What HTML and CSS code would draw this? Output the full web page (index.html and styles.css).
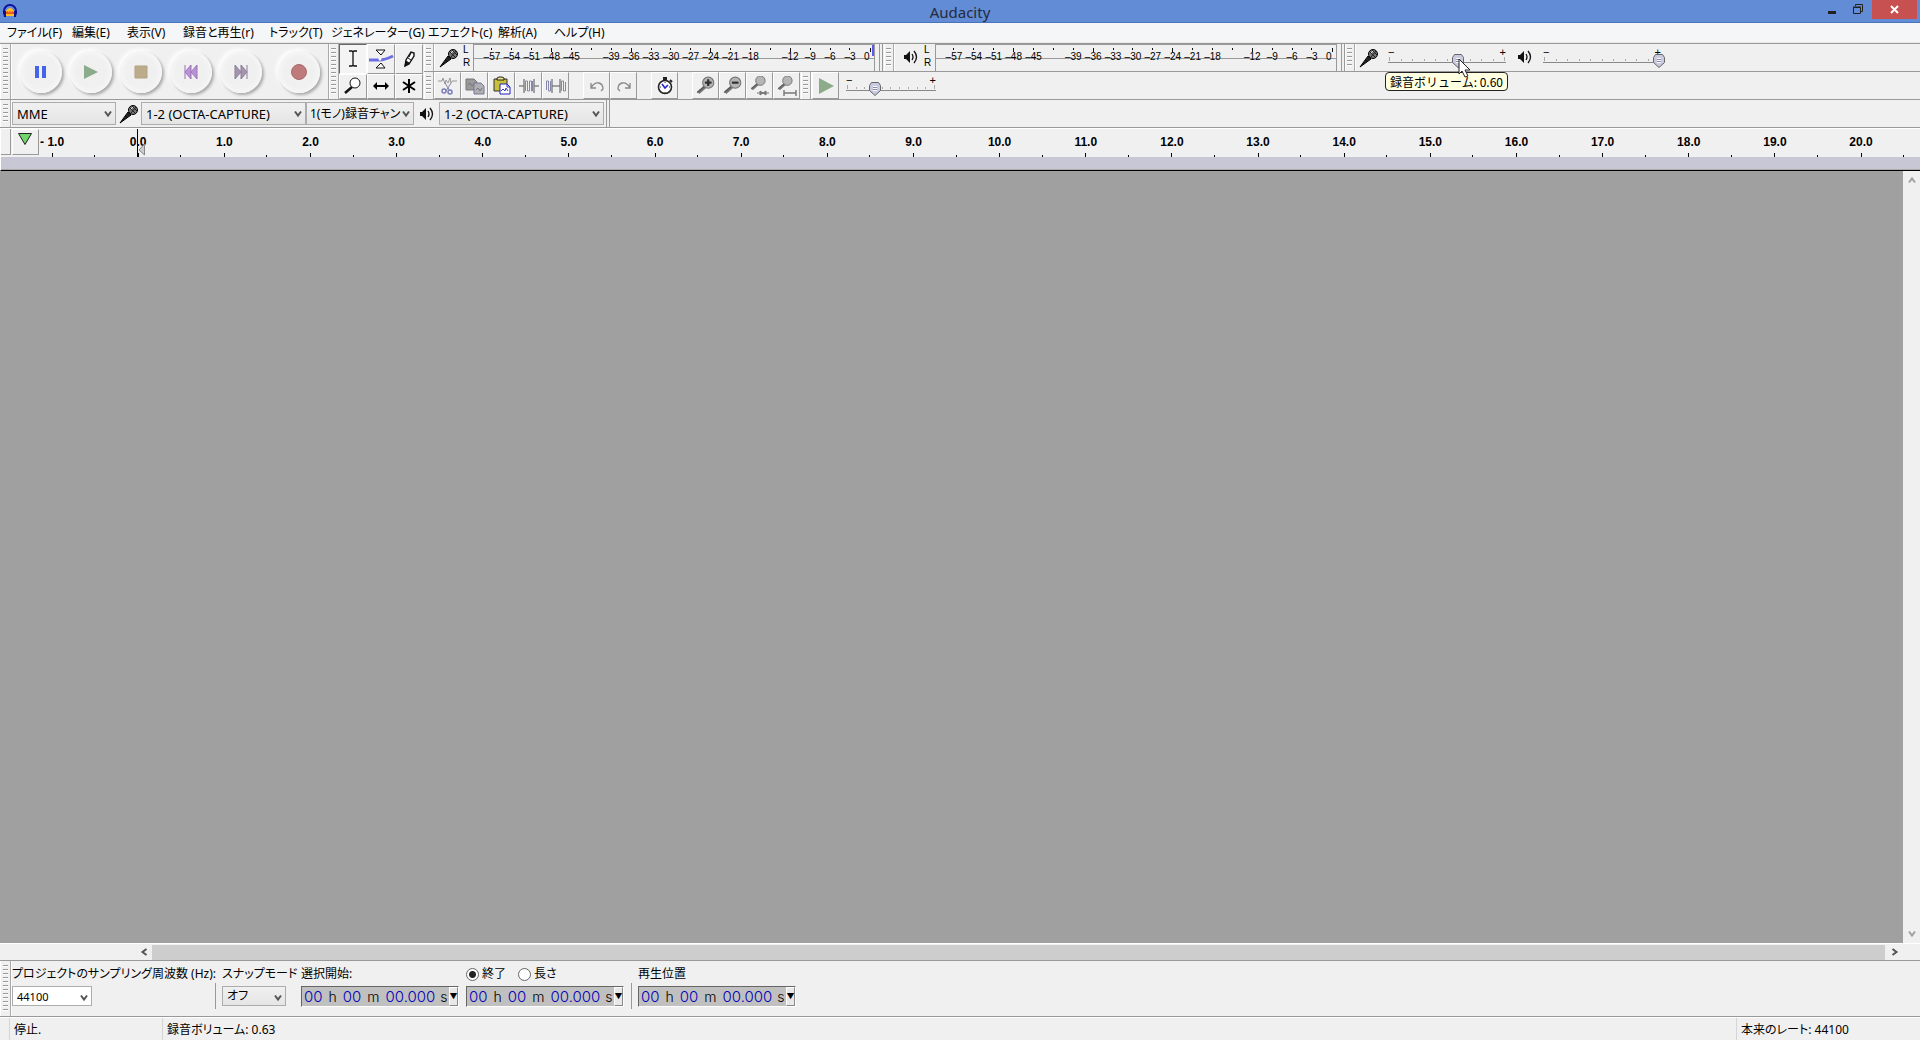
FILE: index.html
```html
<!DOCTYPE html>
<html lang="ja">
<head>
<meta charset="utf-8">
<title>Audacity</title>
<link rel="stylesheet" href="styles.css">
</head>
<body>
<svg class="defs" aria-hidden="true">
  <symbol id="mic" viewBox="0 0 20 20"><path d="M1 19 9 8l3 3z" fill="#222" stroke="#000"/><circle cx="14" cy="6" r="4.5" fill="#777" stroke="#000"/><path d="M11 4l5 5M13 2l5 5M12 9l5-6" stroke="#222" fill="none"/><path d="M12 5l2-2" stroke="#ddd"/></symbol>
  <symbol id="speaker" viewBox="0 0 14 14"><path d="M0 5h2l4-4v12L2 9H0z" fill="#111"/><path d="M8 4q2 3 0 6M10 1q5 6 0 12" fill="none" stroke="#111" stroke-width="1.3"/></symbol>
  <symbol id="chev" viewBox="0 0 8 8"><path d="M1 1.500l3 4 3-4" fill="none" stroke="#555" stroke-width="2"/></symbol>
  <symbol id="glass" viewBox="0 0 18 18"><path d="M2 15l7-6" stroke="#777" stroke-width="3"/><path d="M1 15l7-6" stroke="#555"/><circle cx="11" cy="6" r="5" fill="#b5b5b5" stroke="#777"/></symbol>
</svg>
<div class="window">
<header class="titlebar">
  <svg class="logo" viewBox="0 0 16 16"><path d="M2 11V8a6 6 0 0 1 12 0v3" fill="none" stroke="#10109a" stroke-width="2"/><path d="M4 13V8q4-6 8 0v5z" fill="#ffc020"/><path d="M4 9l2-1 1 2 1-3 1 3 1-2 2 1v2H4z" fill="#f05020"/><path d="M1 8h3v6H2zM15 8h-3v6h2z" fill="#10108a"/></svg>
  <h1>Audacity</h1>
  <div class="controls">
    <button aria-label="最小化"><svg width="10" height="12"><path d="M1 9.500h8" stroke="#222" stroke-width="3"/></svg></button>
    <button aria-label="元に戻す"><svg width="12" height="12"><path d="M1.500 4.500h7v6h-7zM1 4h8M3.500 3V1.500h7v7H9" fill="none" stroke="#222"/></svg></button>
    <button class="close" aria-label="閉じる"><svg width="10" height="10"><path d="M1 1l7 7M8 1L1 8" stroke="#fff" stroke-width="2"/></svg></button>
  </div>
</header>
<nav class="menu">
  <a href="#">ファイル(F)</a><a href="#">編集(E)</a><a href="#">表示(V)</a><a href="#">録音と再生(r)</a><a href="#">トラック(T)</a><a href="#">ジェネレーター(G)</a><a href="#">エフェクト(c)</a><a href="#">解析(A)</a><a href="#">ヘルプ(H)</a>
</nav>
<div class="dock">
  <section class="transport">
    <span class="grip"></span>
    <div class="rounds">
      <button aria-label="一時停止"><svg viewBox="0 0 16 16"><path d="M2 2h4v12H2zM9 2h4v12H9z" fill="#4664ea"/></svg></button>
      <button aria-label="再生"><svg viewBox="0 0 16 16"><path d="M1 1l14 7-14 7z" fill="#8bab8b"/></svg></button>
      <button aria-label="停止"><svg viewBox="0 0 16 16"><path d="M2 2h12v12H2z" fill="#bcac89" stroke="#b3a37e"/></svg></button>
      <button aria-label="先頭へ"><svg viewBox="0 0 16 16"><path d="M2 1v14" stroke="#9874bb"/><path d="M8 1v14L2 8zM14 1v14L8 8z" fill="#bd91d6" stroke="#9874bb"/></svg></button>
      <button aria-label="末尾へ"><svg viewBox="0 0 16 16"><path d="M14 1v14" stroke="#8d7c9b"/><path d="M2 1v14l6-7zM8 1v14l6-7z" fill="#a596b0" stroke="#8d7c9b"/></svg></button>
      <button class="rec" aria-label="録音"><svg viewBox="0 0 16 16"><circle cx="8" cy="8" r="7.500" fill="#bf7a7b" stroke="#a86a6a"/></svg></button>
    </div>
  </section>
  <section class="tools">
    <span class="grip"></span>
    <div class="toolgrid">
      <button class="btn pressed" aria-label="選択"><svg viewBox="0 0 20 20"><path d="M6 2h3l1 1 1-1h3M6 17h3l1-1 1 1h3M10 3v13" fill="none" stroke="#111" stroke-width="1.300"/></svg></button>
      <button class="btn" aria-label="エンベロープ"><svg class="wide" viewBox="0 0 26 24"><path d="M1 13h10q6 0 14-4" fill="none" stroke="#6a6ee0" stroke-width="3"/><path d="M8 3h9l-4 5zM8 21h9l-4-5z" fill="#fff" stroke="#111"/><circle cx="12" cy="12" r="1.500" fill="#fff"/></svg></button>
      <button class="btn" aria-label="描画"><svg viewBox="0 0 20 20"><path d="M6 17l1-6 5-8 3 1v3l-5 8z" fill="#fff" stroke="#111" stroke-width="1.400"/><path d="M6 17l1-5 3 2zM9 9l3 2M12 4l-2 4" fill="#111" stroke="#111"/></svg></button>
      <button class="btn" aria-label="ズーム"><svg viewBox="0 0 20 20"><path d="M2 17l7-6" stroke="#111" stroke-width="2.500"/><circle cx="12" cy="7" r="5" fill="#fff" stroke="#111"/></svg></button>
      <button class="btn" aria-label="タイムシフト"><svg viewBox="0 0 20 20"><path d="M3 10h14" stroke="#000" stroke-width="2"/><path d="M2 10l4-4v8zM18 10l-4-4v8z"/></svg></button>
      <button class="btn" aria-label="マルチツール"><svg viewBox="0 0 20 20"><path d="M10 3v14M4 6l12 8M4 14l12-8" stroke="#000" stroke-width="2"/></svg></button>
    </div>
  </section>
  <div class="rows">
    <div class="row">
      <section class="meterbar recbar">
        <span class="grip"></span><svg class="mic"><use href="#mic"/></svg>
        <div class="lr"><span>L</span><span>R</span></div>
        <div class="meter live"><span>–57</span><span>–54</span><span>–51</span><span class="m">–48</span><span>–45</span><span></span><span>–39</span><span class="m">–36</span><span>–33</span><span>–30</span><span>–27</span><span class="m">–24</span><span>–21</span><span>–18</span><span></span><span class="m">–12</span><span>–9</span><span>–6</span><span>–3</span><span class="zero">0</span></div>
        <span class="cap"></span>
      </section>
      <section class="meterbar playbar">
        <span class="grip"></span><svg class="spk"><use href="#speaker"/></svg>
        <div class="lr"><span>L</span><span>R</span></div>
        <div class="meter"><span>–57</span><span>–54</span><span>–51</span><span class="m">–48</span><span>–45</span><span></span><span>–39</span><span class="m">–36</span><span>–33</span><span>–30</span><span>–27</span><span class="m">–24</span><span>–21</span><span>–18</span><span></span><span class="m">–12</span><span>–9</span><span>–6</span><span>–3</span><span class="zero">0</span></div>
        <span class="cap"></span>
      </section>
      <section class="mixer">
        <span class="grip"></span><svg class="mic"><use href="#mic"/></svg>
        <div class="slider">
          <div class="signs"><span>−</span><span>+</span></div>
          <div class="ticks"><i></i><i></i><i></i><i></i><i></i><i></i><i></i><i></i><i></i><i></i><i></i></div>
          <input type="range" min="0" max="100" value="60" aria-label="録音ボリューム">
          <div class="tip" role="tooltip">録音ボリューム: 0.60</div>
          <svg class="cursor" viewBox="0 0 13 20"><path d="M1 1v15l3-3 3 6 3-1-3-6h5z" fill="#fff" stroke="#222"/></svg>
        </div>
        <svg class="spk"><use href="#speaker"/></svg>
        <div class="slider">
          <div class="signs"><span>−</span><span>+</span></div>
          <div class="ticks"><i></i><i></i><i></i><i></i><i></i><i></i><i></i><i></i><i></i><i></i><i></i></div>
          <input type="range" min="0" max="100" value="100" aria-label="再生ボリューム">
        </div>
      </section>
    </div>
    <div class="row edit">
      <span class="grip"></span>
      <div class="group">
        <button class="btn" aria-label="切り取り"><svg viewBox="0 0 20 20"><path d="M0 5h4l1-3 2 6 1-4 2 3 2-5 1 5 1-2h5" fill="none" stroke="#999"/><path d="M7 7l5 8M13 7l-5 8" stroke="#8286a8"/><circle cx="6" cy="15" r="2" fill="none" stroke="#7a7eb8" stroke-width="1.500"/><circle cx="12" cy="16" r="2" fill="none" stroke="#7a7eb8" stroke-width="1.500"/></svg></button>
        <button class="btn" aria-label="コピー"><svg viewBox="0 0 20 20"><path d="M1 3h8l3 3v8H1z" fill="#999" stroke="#777"/><path d="M9 7h7l3 3v8H9z" fill="#b0b0b4" stroke="#777799"/><path d="M3 9l2-2 2 3 2-2M11 14l2-2 2 3 2-3" fill="none" stroke="#777"/></svg></button>
        <button class="btn" aria-label="貼り付け"><svg viewBox="0 0 20 20"><path d="M2 3h13v12H2z" fill="#c8bf3a" stroke="#333"/><path d="M5 4V2l2-1h3l2 1v2z" fill="#eee48a" stroke="#222"/><path d="M8 8h7l3 3v7H8z" fill="#fff" stroke="#2020c0"/><path d="M15 8v3h3M9 15l2-2 2 2 1-3 2 3" fill="none" stroke="#3a3ac8"/></svg></button>
        <button class="btn" aria-label="トリム"><svg viewBox="0 0 20 20"><path d="M0 10h5M15 10h5" stroke="#888" stroke-width="1.500"/><path d="M5 3v14M15 3v14" stroke="#777" stroke-width="1.300"/><path d="M6.500 15V5h2v10h2V5h2v10h1V5" fill="none" stroke="#8587ad"/></svg></button>
        <button class="btn" aria-label="無音化"><svg viewBox="0 0 20 20"><path d="M6 10h8" stroke="#888" stroke-width="1.500"/><path d="M6 3v14M14 3v14" stroke="#777" stroke-width="1.300"/><path d="M.5 14V5h2v10h2V5M15.500 15V5h2v10h2V6" fill="none" stroke="#8587ad"/></svg></button>
      </div>
      <div class="group">
        <button class="btn" aria-label="元に戻す"><svg viewBox="0 0 20 20"><path d="M4 12q3-6 8-5 4 1 4 6l-2 2M4 7v5h5" fill="none" stroke="#888" stroke-width="1.300"/></svg></button>
        <button class="btn" aria-label="やり直し"><svg viewBox="0 0 20 20"><path d="M16 12q-3-6-8-5-4 1-4 6l2 2M16 7v5h-5" fill="none" stroke="#888" stroke-width="1.300"/></svg></button>
      </div>
      <div class="group">
        <button class="btn" aria-label="同期ロック"><svg viewBox="0 0 20 20"><path d="M8 1h4v3H8z" fill="#222"/><path d="M15 4l2 2" stroke="#222" stroke-width="2"/><circle cx="10" cy="11" r="6.500" fill="#fff" stroke="#222" stroke-width="1.600"/><path d="M7 8l3 4 3-3" fill="none" stroke="#2424d0" stroke-width="1.600"/><path d="M10 6v1M10 16v1M5 11h1M14 11h1" stroke="#333"/></svg></button>
      </div>
      <div class="group">
        <button class="btn" aria-label="拡大"><svg viewBox="0 0 18 18"><use href="#glass"/><path d="M8 6h6M11 3v6" stroke="#333" stroke-width="2"/></svg></button>
        <button class="btn" aria-label="縮小"><svg viewBox="0 0 18 18"><use href="#glass"/><path d="M8 6h6" stroke="#333" stroke-width="2"/></svg></button>
        <button class="btn" aria-label="選択範囲に合わせる"><svg viewBox="0 0 20 20"><use href="#glass" x="0" y="-1" width="17" height="17"/><path d="M7 17h12M10 15l3 2-3 2zM16 15l-3 2 3 2z" stroke="#777" fill="#777"/></svg></button>
        <button class="btn" aria-label="プロジェクトに合わせる"><svg viewBox="0 0 20 20"><use href="#glass" x="0" y="-1" width="17" height="17"/><path d="M7 17h12M7 14v6M19 14v6" stroke="#777" fill="none" stroke-width="1.400"/></svg></button>
      </div>
      <span class="grip"></span>
      <button class="btn" aria-label="指定速度で再生"><svg viewBox="0 0 20 20"><path d="M3 2l15 8-15 8z" fill="#8bab8b"/></svg></button>
      <div class="slider speed">
        <div class="signs"><span>−</span><span>+</span></div>
        <div class="ticks"><i></i><i></i><i></i><i></i><i></i><i></i><i></i><i></i><i></i><i></i><i></i></div>
        <input type="range" min="0" max="100" value="31" aria-label="再生速度">
      </div>
    </div>
  </div>
</div>
<section class="devices">
  <span class="grip"></span>
  <label class="sel w-host"><select aria-label="ホスト"><option>MME</option></select><svg><use href="#chev"/></svg></label>
  <svg class="mic"><use href="#mic"/></svg>
  <label class="sel w-dev"><select aria-label="録音デバイス"><option>1-2 (OCTA-CAPTURE)</option></select><svg><use href="#chev"/></svg></label>
  <label class="sel w-chan"><select aria-label="録音チャンネル"><option>1(モノ)録音チャン</option></select><svg><use href="#chev"/></svg></label>
  <svg class="spk"><use href="#speaker"/></svg>
  <label class="sel w-dev"><select aria-label="再生デバイス"><option>1-2 (OCTA-CAPTURE)</option></select><svg><use href="#chev"/></svg></label>
  <span class="cap"></span>
</section>
<section class="ruler">
  <div class="scale"><span>- 1.0</span><span>0.0</span><span>1.0</span><span>2.0</span><span>3.0</span><span>4.0</span><span>5.0</span><span>6.0</span><span>7.0</span><span>8.0</span><span>9.0</span><span>10.0</span><span>11.0</span><span>12.0</span><span>13.0</span><span>14.0</span><span>15.0</span><span>16.0</span><span>17.0</span><span>18.0</span><span>19.0</span><span>20.0</span></div>
  <div class="band"></div>
  <div class="pincorner"></div>
  <button class="pin" aria-label="再生ヘッド"><svg width="17" height="15"><path d="M1.500 1.500h13l-6.500 11z" fill="#6fd66a" stroke="#222"/></svg></button>
  <svg class="playhead" width="9" height="28"><path d="M.5 0v28" stroke="#000" stroke-width="1"/><path d="M7.500 15v11L2 21z" fill="#ccc" stroke="#888"/></svg>
</section>
<main class="workspace">
  <div class="tracks"></div>
  <div class="vscroll"><svg><use href="#chev"/></svg><svg><use href="#chev"/></svg></div>
</main>
<div class="hscroll"><svg class="left"><use href="#chev"/></svg><div class="thumb"></div><svg class="right"><use href="#chev"/></svg></div>
<section class="selection">
  <span class="grip"></span>
  <div class="field f-rate"><label for="rate">プロジェクトのサンプリング周波数 (Hz):</label><div class="sel combo"><input id="rate" type="text" value="44100"><svg><use href="#chev"/></svg></div></div>
  <span class="sep"></span>
  <div class="field f-snap"><label for="snap">スナップモード</label><div class="sel snap"><select id="snap"><option>オフ</option></select><svg><use href="#chev"/></svg></div></div>
  <div class="field f-time"><span class="cap-label">選択開始:</span><div class="time"><b>00</b><span>h</span><b>00</b><span>m</span><b>00.000</b><span>s</span><button aria-label="形式">▼</button></div></div>
  <div class="field f-end"><div class="radios"><label><input type="radio" name="end" checked>終了</label><label><input type="radio" name="end">長さ</label></div><div class="time"><b>00</b><span>h</span><b>00</b><span>m</span><b>00.000</b><span>s</span><button aria-label="形式">▼</button></div></div>
  <span class="sep"></span>
  <div class="field"><span class="cap-label">再生位置</span><div class="time"><b>00</b><span>h</span><b>00</b><span>m</span><b>00.000</b><span>s</span><button aria-label="形式">▼</button></div></div>
</section>
<footer class="status"><span class="s1">停止.</span><span class="s2">録音ボリューム: 0.63</span><span class="s3">本来のレート: 44100</span></footer>
</div>
</body>
</html>
```
FILE: styles.css
```css
* { box-sizing: border-box; }
body { margin: 0; background: #f0f0f0; color: #000; font: 12px/16px "Noto Sans", "Noto Sans CJK JP", sans-serif; font-feature-settings: "palt"; }
button { padding: 0; border: 0; background: none; font: inherit; color: inherit; }
svg { display: block; flex: none; }
.defs { position: absolute; width: 0; height: 0; }
.window { display: flex; flex-direction: column; min-height: 100vh; }

.titlebar { display: grid; grid-template-columns: 1fr auto 1fr; height: 23px; background: #628cd5; border-bottom: 1px solid #4a73bb; }
.logo { width: 16px; height: 16px; margin: 3px 0 0 2px; }
.titlebar h1 { margin: 0; font: 400 15px/24px "Noto Sans", sans-serif; color: #25293a; }
.controls { display: flex; justify-content: flex-end; align-items: flex-start; padding-right: 3px; }
.controls button { display: flex; justify-content: center; width: 26px; height: 19px; padding-top: 3px; }
.controls button:first-child { width: 27px; }
.controls button:nth-child(2) { margin-right: 1px; }
.controls .close { width: 45px; padding-top: 5px; background: #c75050; }

.menu { display: grid; grid-template-columns: 65px 55px 56px 86px 62px 97px 70px 56px auto; justify-content: start; height: 20px; padding-left: 7px; background: #f5f6f8; border-bottom: 1px solid #e8e8e8; }
.menu a { color: #000; text-decoration: none; white-space: nowrap; line-height: 20px; }

.grip { flex: none; width: 11px; border: 1px solid #aaa; border-width: 0 1px 0 0; box-shadow: inset 1px 0 #fff, 1px 0 #fff; background: repeating-linear-gradient(#999 0 1px, #fff 1px 2px, transparent 2px 4px) center / 5px calc(100% - 8px) no-repeat; }
.mic { width: 20px; height: 20px; }
.spk { width: 14px; height: 14px; }
.cap { width: 4px; border: 1px solid #999; border-width: 0 1px; }

.dock { display: grid; grid-template-columns: 328px 96px 1fr; height: 57px; border-top: 1px solid #999; border-bottom: 1px solid #999; }
.transport, .tools { display: flex; }
.tools { border-left: 1px solid #aaa; }
.tools .grip { width: 10px; }
.rounds { display: flex; align-items: center; gap: 8px; padding-left: 9px; }
.rounds button { display: flex; align-items: center; justify-content: center; width: 42px; height: 42px; border-radius: 50%; background: radial-gradient(#f0f0f0 50%, #f7f7f7 75%); box-shadow: 2px 2px 3px #aaa, -2px -2px 4px #fff; }
.rounds svg { width: 16px; height: 16px; }
.rounds .rec { margin-left: 8px; }
.toolgrid { display: grid; grid-template-columns: repeat(3, 28px); }
.btn { display: flex; align-items: center; justify-content: center; flex: none; width: 27px; background: #f0f0f0; border: 1px solid; border-color: #fff #999 #999 #fff; }
.toolgrid .btn { width: auto; }
.btn svg { width: 20px; height: 20px; }
.btn .wide { width: 26px; height: 24px; }
.btn.pressed { border-color: #666 #fff #fff #666; background: #f4f4f4; }

.rows { display: grid; grid-template-rows: 28px 27px; }
.row { display: flex; min-width: 0; }
.row:first-child { border-bottom: 1px solid #999; }
.row .grip { width: 10px; }
.meterbar { display: flex; align-items: stretch; width: 460px; }
.playbar { width: 461px; }
.meterbar .mic { margin: 4px 0 0 5px; }
.meterbar .spk { margin: 6px 0 0 10px; }
.lr { display: grid; grid-template-rows: 13px 13px; width: 14px; padding-left: 4px; font: 10px/12px "Liberation Sans", sans-serif; }
.playbar .lr { width: 17px; padding-left: 6px; }
.meter { display: flex; width: 402px; padding-left: 8px; border: 1px solid #999; border-width: 1px 1px 0 1px; background: linear-gradient(#999, #999) 0 13px / 100% 1px no-repeat; font: 10px/10px "Liberation Sans", sans-serif; }
.meter span { flex: 1; min-width: 0; display: flex; justify-content: center; align-items: flex-start; padding-top: 7px; white-space: nowrap; background: linear-gradient(#111, #111) 50% 3px / 1px 2px no-repeat; }
.meter .m { background-size: 1px 4px; }
.meter .zero { flex: none; width: 14px; justify-content: flex-start; padding-left: 4px; background-position: 10px 3px; background-size: 1px 4px; }
.meter.live .zero { border-right: 2px solid transparent; border-image: linear-gradient(#5a5af0 0 11px, transparent 11px) 2; }
.meterbar .cap { margin-left: 4px; }

.mixer { display: flex; }
.mixer .mic { margin: 4px 5px 0 4px; }
.mixer .spk { margin: 6px 7px 0 8px; }
.slider { position: relative; display: grid; width: 126px; height: 27px; }
.slider > * { grid-area: 1 / 1; }
.signs { display: flex; justify-content: space-between; padding: 0 4px; font: 11px/16px "Liberation Sans", sans-serif; }
.ticks { display: flex; justify-content: space-between; align-self: start; height: 6px; margin: 13px 4px 0; padding: 0 1px; border-bottom: 1px solid #888; }
.ticks i { width: 1px; height: 2px; margin-top: 2px; background: #aaa; }
.ticks i:first-child, .ticks i:last-child { height: 4px; margin-top: 0; }
.slider input { appearance: none; align-self: start; width: 100%; height: 14px; margin: 10px 0 0; background: none; }
.slider input::-webkit-slider-thumb { appearance: none; width: 12px; height: 14px; border: 0; background: url("data:image/svg+xml,%3Csvg xmlns='http://www.w3.org/2000/svg' width='12' height='14'%3E%3Cpath d='M2.500 .5h7l2 3v5l-5.500 5-5.500-5v-5z' fill='%23c9c9e0' stroke='%23666'/%3E%3Cpath d='M4 4.500h4M4 6.500h4M4 8.500h4' stroke='%23fff'/%3E%3Cpath d='M4 5.500h4M4 7.500h4' stroke='%238888aa'/%3E%3C/svg%3E") no-repeat; }
.speed { width: 98px; margin-left: 3px; }
.tip { position: absolute; left: 1px; top: 28px; z-index: 2; width: 123px; height: 19px; padding-left: 4px; border: 1px solid #222; border-radius: 4px; background: #ffffe1; font: 12px/17px "Noto Sans CJK JP", sans-serif; font-feature-settings: normal; white-space: nowrap; }
.cursor { position: absolute; left: 74px; top: 14px; z-index: 3; width: 13px; height: 20px; }
.group { display: flex; margin-right: 14px; }
.edit .group:nth-of-type(4) { margin-right: 1px; }
.edit .grip + .btn { margin-left: 1px; }

.devices { display: flex; height: 28px; border-bottom: 1px solid #999; }
.devices .mic { margin: 4px 2px 0 3px; }
.devices .spk { margin: 7px 5px 0 6px; }
.devices .cap { margin-left: 2px; }
.sel { position: relative; display: block; height: 23px; }
.devices .sel { margin-top: 2px; }
.sel select, .sel input { appearance: none; width: 100%; height: 100%; padding: 0 20px 0 4px; border: 1px solid #acacac; border-radius: 0; background: linear-gradient(#f0f0f0, #e5e5e5); color: #000; font: inherit; font-size: 13px; outline: 0; overflow: hidden; }
.sel svg { position: absolute; right: 4px; top: 8px; width: 8px; height: 8px; pointer-events: none; }
.w-host { width: 104px; margin-left: 1px; }
.w-dev { width: 165px; }
.w-chan { width: 108px; }
.sel.w-chan select { padding: 0 12px 0 3px; font-size: 12px; }

.ruler { position: relative; height: 43px; border-top: 1px solid #fff; border-bottom: 1px solid #000; border-left: 1px solid #fff; }
.scale { display: flex; height: 28px; padding: 0 16px 0 8px; font: bold 12px/26px "Liberation Sans", sans-serif; }
.scale span { flex: 1; text-align: center; white-space: nowrap; background: linear-gradient(#000, #000) 50% 24px / 1px 4px no-repeat, linear-gradient(#000, #000) 100% 26px / 1px 2px no-repeat; }
.band { height: 13px; background: #c8c7d6; border-bottom: 1px solid #aaa; }
.pincorner { position: absolute; left: 0; top: 0; width: 10px; height: 26px; border: 1px solid #999; border-width: 0 1px 1px 0; background: #f0f0f0; }
.pin { position: absolute; left: 11px; top: 0; display: flex; justify-content: center; width: 27px; height: 26px; padding-top: 2px; background: #f0f0f0; border: 1px solid; border-color: #fff #999 #999 #fff; }
.playhead { position: absolute; left: 136px; top: 0; }

.workspace { flex: 1; display: flex; }
.tracks { flex: 1; background: #a0a0a0; }
.vscroll { display: flex; flex-direction: column; justify-content: space-between; align-items: center; width: 17px; padding: 5px 0; opacity: .5; }
.vscroll svg { width: 8px; height: 8px; }
.vscroll svg:first-child { transform: rotate(180deg); }
.hscroll { display: flex; align-items: center; height: 18px; padding: 0 21px 0 140px; border-top: 1px solid #fff; border-bottom: 1px solid #999; }
.hscroll svg { width: 8px; height: 8px; }
.hscroll .left { transform: rotate(90deg); }
.hscroll .right { transform: rotate(-90deg); }
.thumb { flex: 1; height: 15px; margin: 0 6px 0 4px; background: #cdcdcd; }

.selection { display: flex; height: 56px; border-bottom: 1px solid #999; }
.field { padding-top: 5px; white-space: nowrap; }
.field > label, .cap-label { display: block; height: 20px; }
.f-rate { width: 204px; padding-left: 1px; }
.sep { width: 1px; height: 26px; margin-top: 22px; background: #999; }
.combo { width: 80px; height: 20px; }
.sel.combo input { background: #fff; font-size: 11px; }
.snap { width: 64px; height: 20px; }
.sel.snap select { font-size: 12px; }
.f-snap { width: 85px; padding-left: 6px; }
.f-time { width: 165px; }
.f-end { width: 165px; }
.sep + .field { padding-left: 6px; }
.time { display: flex; align-items: center; width: 158px; height: 21px; padding-left: 2px; border: 1px solid; border-color: #666 #fff #fff #666; background: #c0c0c0; font: 300 15px/19px Inter, sans-serif; }
.time b { font-weight: 300; color: #0000b8; }
.time span { margin: 0 6px; font-size: 14px; }
.time span:nth-of-type(3) { margin: 0 0 0 5px; }
.time button { width: 9px; height: 19px; margin-left: auto; border: 1px solid; border-color: #fff #888 #888 #fff; background: #e8e8e8; font-size: 8px; line-height: 16px; display: flex; justify-content: center; }
.radios { display: flex; gap: 12px; height: 20px; }
.radios label { display: flex; align-items: flex-start; gap: 3px; }
.radios input { appearance: none; width: 13px; height: 13px; margin: 2px 0 0; border: 1px solid #666; border-radius: 50%; background: #fff; }
.radios input:checked { background: radial-gradient(#222 0 3px, #fff 4px); }
.status { display: grid; grid-template-columns: 153px 1fr 184px; height: 23px; padding-left: 9px; border-top: 1px solid #fff; }
.status span { padding-left: 4px; border-left: 1px solid #d5d5d5; line-height: 24px; }
```
